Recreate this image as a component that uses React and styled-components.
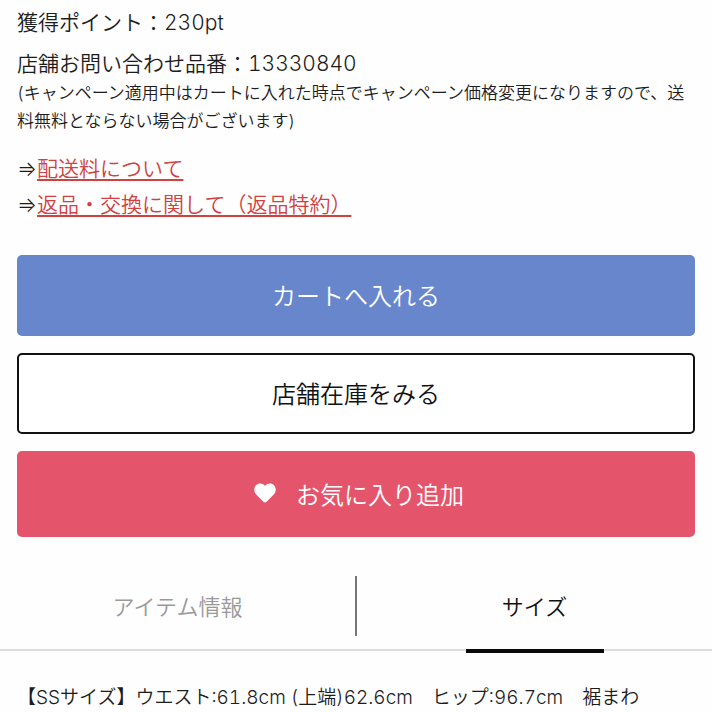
import React from "react";
import styled, { createGlobalStyle } from "styled-components";

const App = () => {
  return (
    <>
      <GlobalStyle />
      <Page>
        <Details>
          <Info>獲得ポイント：230pt</Info>
          <Info>店舗お問い合わせ品番：13330840</Info>
          <Note>
            (キャンペーン適用中はカートに入れた時点でキャンペーン価格変更になりますので、送料無料とならない場合がございます)
          </Note>
          <Links>
            <li>
              ⇒<TextLink href="#shipping">配送料について</TextLink>
            </li>
            <li>
              ⇒<TextLink href="#returns">返品・交換に関して（返品特約）</TextLink>
            </li>
          </Links>
        </Details>

        <Actions>
          <Button type="button" $bg="#6886cb" $color="#fff">
            カートへ入れる
          </Button>
          <Button type="button" $bg="#fff" $color="#111" $border="#111">
            店舗在庫をみる
          </Button>
          <Button type="button" $bg="#e4556c" $color="#fff" $tall>
            <Heart viewBox="0 0 22 20" aria-hidden="true">
              <path d="M11 19.5 C10.4 19.5 9.9 19.2 9.4 18.7 L2 11.2 C-0.4 8.6 -0.2 4.6 2 2.3 C4.5 -0.2 8.6 0 11 3 C13.4 0 17.5 -0.2 20 2.3 C22.2 4.6 22.4 8.6 20 11.2 L12.6 18.7 C12.1 19.2 11.6 19.5 11 19.5 Z" />
            </Heart>
            お気に入り追加
          </Button>
        </Actions>

        <Tabs role="tablist">
          <Tab type="button" role="tab" aria-selected="false">
            アイテム情報
          </Tab>
          <Divider />
          <Tab type="button" role="tab" aria-selected="true" $active>
            サイズ
          </Tab>
        </Tabs>

        <SizeText role="tabpanel">
          【SSサイズ】ウエスト:61.8cm (上端)62.6cm　ヒップ:96.7cm　裾まわ
        </SizeText>
      </Page>
    </>
  );
};

export default App;

const GlobalStyle = createGlobalStyle`
  * {
    box-sizing: border-box;
  }

  body {
    margin: 0;
    background-color: #fefefe;
    color: #1c1c1c;
    font-family: Inter, "Noto Sans CJK JP", sans-serif;
    font-weight: 350;
    font-variant-numeric: tabular-nums;
  }

  button {
    font-family: inherit;
    font-weight: inherit;
    cursor: pointer;
  }
`;

const Page = styled.main`
  width: 100%;
`;

const Details = styled.section`
  padding: 3px 17px 0;
`;

const Info = styled.p`
  margin: 0;
  font-size: 21px;
  line-height: 40px;

  & + & {
    line-height: 42px;
    margin-bottom: -6px;
  }
`;

const Note = styled.p`
  margin: 0;
  font-size: 17px;
  line-height: 28px;
`;

const Links = styled.ul`
  list-style: none;
  margin: 16px 0 0;
  padding: 0;
  font-size: 21px;
  line-height: 36px;
`;

const TextLink = styled.a`
  color: #d0413f;
  text-decoration: underline;
  text-decoration-thickness: 2px;
  text-underline-offset: 3px;
`;

const Actions = styled.section`
  display: flex;
  flex-direction: column;
  gap: 17px;
  padding: 32px 17px 39px;
`;

const Button = styled.button`
  display: flex;
  align-items: center;
  justify-content: center;
  gap: 20px;
  width: 100%;
  height: ${({ $tall }) => ($tall ? "86px" : "81px")};
  padding: ${({ $tall }) => ($tall ? "0 10px 2px 16px" : "0 16px 2px")};
  border: ${({ $border }) => ($border ? `2px solid ${$border}` : "0")};
  border-radius: 5px;
  background-color: ${({ $bg }) => $bg};
  color: ${({ $color }) => $color};
  font-size: 24px;
`;

const Heart = styled.svg`
  width: 22px;
  height: 20px;
  fill: #fff;
`;

const Tabs = styled.div`
  display: flex;
  height: 75px;
  border-bottom: 2px solid #ddd;
`;

const Tab = styled.button`
  position: relative;
  flex: 1;
  height: 60px;
  padding: 0 0 2px;
  border: 0;
  background: none;
  color: ${({ $active }) => ($active ? "#111" : "#999")};
  font-size: 22px;

  &::after {
    content: "";
    display: ${({ $active }) => ($active ? "block" : "none")};
    position: absolute;
    top: 73px;
    left: 50%;
    width: 138px;
    height: 4px;
    margin-left: -69px;
    background-color: #0a0a0a;
  }
`;

const Divider = styled.span`
  width: 2px;
  height: 60px;
  background-color: #777;
`;

const SizeText = styled.p`
  margin: 0;
  padding: 33px 17px 0;
  font-size: 19px;
  line-height: 28px;
`;
